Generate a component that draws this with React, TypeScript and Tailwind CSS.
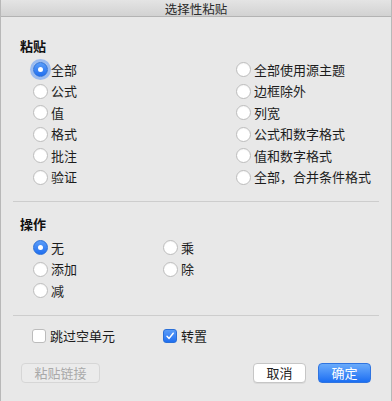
import React, { useState } from 'react';

const font = { fontFamily: '"Noto Sans CJK SC", "Noto Sans", sans-serif' };

const Radio: React.FC<{ label: string; checked?: boolean; focus?: boolean; onClick?: () => void }> = ({ label, checked, focus, onClick }) => (
    <div className="flex items-center h-[21.5px] cursor-default" onClick={onClick}>
        {checked ? (
            <span
                className={`w-[15px] h-[15px] rounded-full bg-gradient-to-b from-[#5a9cf8] to-[#1f6ff0] border border-[#2a6fd8] flex items-center justify-center ${focus ? 'shadow-[0_0_0_3px_rgba(90,150,245,0.55)]' : ''}`}
            >
                <span className="w-[5px] h-[5px] rounded-full bg-white" />
            </span>
        ) : (
            <span className="w-[15px] h-[15px] rounded-full bg-white border border-[#bcbcbc] shadow-[inset_0_1px_1px_rgba(0,0,0,0.04)]" />
        )}
        <span className="ml-[3px] text-[13px] leading-[16px] text-[#1c1c1c]">{label}</span>
    </div>
);

const Checkbox: React.FC<{ label: string; checked?: boolean; onClick?: () => void }> = ({ label, checked, onClick }) => (
    <div className="flex items-center h-[21.5px] cursor-default" onClick={onClick}>
        {checked ? (
            <span className="w-[14px] h-[14px] rounded-[3px] bg-gradient-to-b from-[#5a9cf8] to-[#1f6ff0] border border-[#2a6fd8] flex items-center justify-center">
                <svg width="10" height="10" viewBox="0 0 10 10">
                    <path d="M2 5.2 L4.1 7.4 L8.2 2.2" fill="none" stroke="white" strokeWidth="1.5" strokeLinecap="round" strokeLinejoin="round" />
                </svg>
            </span>
        ) : (
            <span className="w-[14px] h-[14px] rounded-[3px] bg-white border border-[#bcbcbc]" />
        )}
        <span className="ml-[4px] text-[13px] leading-[16px] text-[#1c1c1c]">{label}</span>
    </div>
);

const pasteLeft = ['全部', '公式', '值', '格式', '批注', '验证'];
const pasteRight = ['全部使用源主题', '边框除外', '列宽', '公式和数字格式', '值和数字格式', '全部，合并条件格式'];

export default function App() {
    const [paste, setPaste] = useState('全部');
    const [op, setOp] = useState('无');
    const [skip, setSkip] = useState(false);
    const [transpose, setTranspose] = useState(true);

    return (
        <div className="w-[392px] h-[401px] bg-[#e8e8e8] border-x border-[#b8b8b8] flex flex-col select-none" style={font}>
            {/* title bar */}
            <div className="h-[17px] shrink-0 bg-gradient-to-b from-[#e4e4e4] to-[#d2d2d2] border-b border-[#b3b3b3] flex items-center justify-center">
                <span className="text-[12.5px] leading-[13px] text-[#2a2a2a]">选择性粘贴</span>
            </div>

            <div className="pt-[21px]">
                {/* 粘贴 */}
                <div className="pl-[19px] text-[13px] leading-[16px] font-bold text-[#111]">粘贴</div>
                <div className="mt-[5px] pl-[32px] grid grid-cols-[203px_1fr]">
                    <div className="flex flex-col">
                        {pasteLeft.map((l, i) => (
                            <Radio key={l} label={l} checked={paste === l} focus={i === 0} onClick={() => setPaste(l)} />
                        ))}
                    </div>
                    <div className="flex flex-col">
                        {pasteRight.map((l) => (
                            <Radio key={l} label={l} checked={paste === l} onClick={() => setPaste(l)} />
                        ))}
                    </div>
                </div>

                <div className="mt-[13px] mx-[12px] h-px bg-[#cdcdcd]" />

                {/* 操作 */}
                <div className="mt-[14px] pl-[19px] text-[13px] leading-[16px] font-bold text-[#111]">操作</div>
                <div className="mt-[5px] pl-[32px] grid grid-cols-[130px_1fr]">
                    <div className="flex flex-col">
                        {['无', '添加', '减'].map((l) => (
                            <Radio key={l} label={l} checked={op === l} onClick={() => setOp(l)} />
                        ))}
                    </div>
                    <div className="flex flex-col">
                        {['乘', '除'].map((l) => (
                            <Radio key={l} label={l} checked={op === l} onClick={() => setOp(l)} />
                        ))}
                    </div>
                </div>

                <div className="mt-[13px] mx-[12px] h-px bg-[#cdcdcd]" />

                {/* options */}
                <div className="mt-[10px] pl-[31px] grid grid-cols-[131px_1fr]">
                    <Checkbox label="跳过空单元" checked={skip} onClick={() => setSkip(!skip)} />
                    <Checkbox label="转置" checked={transpose} onClick={() => setTranspose(!transpose)} />
                </div>

                {/* buttons */}
                <div className="mt-[16px] pl-[20px] pr-[20px] flex items-center">
                    <button
                        disabled
                        className="w-[79px] h-[20px] rounded-[4px] bg-[#ebebeb] border border-[#d6d6d6] text-[13px] leading-[16px] text-[#a9a9a9]"
                    >
                        粘贴链接
                    </button>
                    <div className="flex-1" />
                    <button className="w-[53px] h-[20px] rounded-[4px] bg-white border border-[#c6c6c6] shadow-[0_1px_0_rgba(0,0,0,0.06)] text-[13px] leading-[16px] text-[#222]">
                        取消
                    </button>
                    <button className="ml-[12px] w-[53px] h-[20px] rounded-[4px] bg-gradient-to-b from-[#6aabfb] to-[#1a6ef2] border border-[#2f74e0] text-[13px] leading-[16px] text-white">
                        确定
                    </button>
                </div>
            </div>
        </div>
    );
}
